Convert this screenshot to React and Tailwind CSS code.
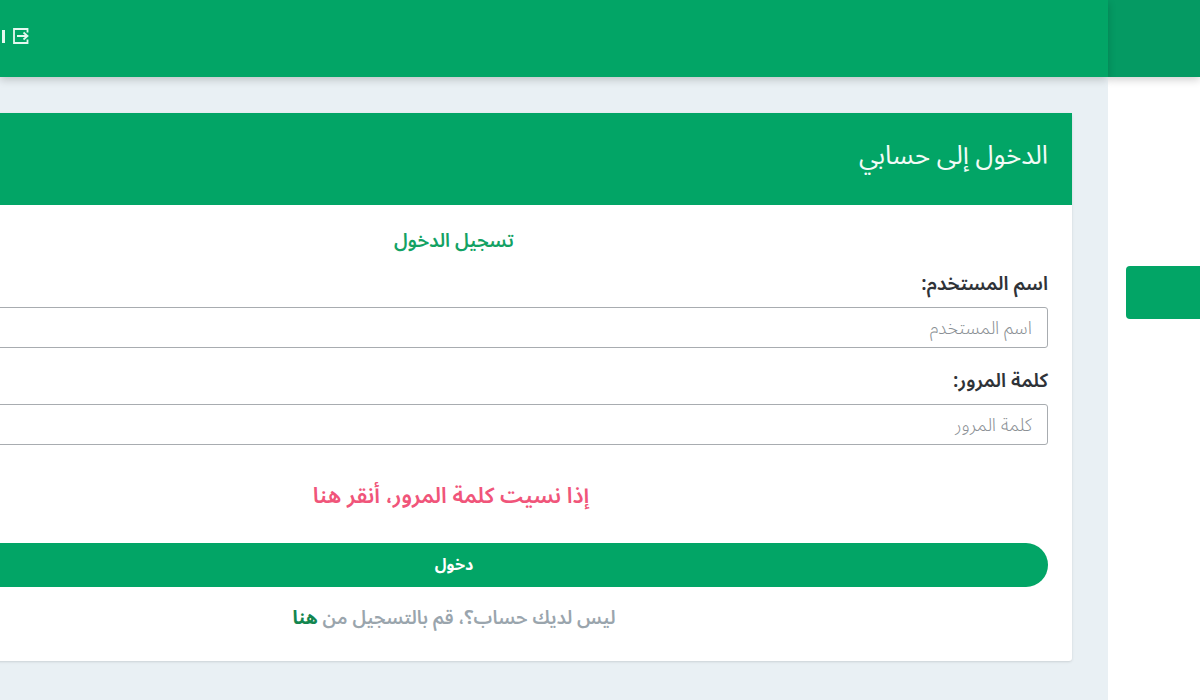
import React from "react";

const font = "font-['Noto_Sans_Arabic','DejaVu_Sans',sans-serif]";

function ExitIcon() {
  return (
    <svg viewBox="0 0 16 16" className="h-[16px] w-[16px]" fill="none" stroke="#e6f8f0" strokeWidth="1.8">
      <path d="M14.5 4.5V1H1v14h13.5v-3.5" />
      <path d="M4 8h10.5M10.5 4.5 14.5 8l-4 3.5" />
    </svg>
  );
}

function Field({ label, placeholder }) {
  return (
    <div className="mb-[16px]">
      <label className="block h-[40px] text-[19.4px] font-semibold leading-[34px] text-[#2f3338]">{label}</label>
      <input
        placeholder={placeholder}
        className="block h-[41px] w-full rounded-[3px] border border-[#a8acb0] bg-white px-[15px] text-[18px] font-light placeholder:text-[#8a8f94]"
      />
    </div>
  );
}

export default function App() {
  return (
    <div dir="rtl" className={`flex h-[700px] w-[1200px] overflow-hidden bg-white ${font}`}>
      {/* Sidebar */}
      <aside className="w-[92px] shrink-0 bg-white">
        <div className="h-[77px] bg-[#059a63] shadow-[0_3px_8px_rgba(0,0,0,0.18)]" />
        <div className="ml-[18px] mr-[-10px] mt-[189px] h-[53px] rounded-[4px] bg-[#02a566]" />
      </aside>

      {/* Main */}
      <main className="w-[1108px] shrink-0 bg-[#e9f0f4]">
        <header className="flex h-[77px] items-center justify-end gap-[8px] bg-[#02a566] pb-[5px] pl-[2px] text-white shadow-[0_3px_8px_rgba(0,0,0,0.18)]">
          <ExitIcon />
          <span className="h-[13px] w-[3px] bg-[#e6f8f0]" />
        </header>

        <section className="mr-[36px] mt-[36px] w-[1236px] rounded-[3px] bg-white shadow-sm">
          <div className="flex h-[92px] items-center bg-[#02a566] px-[24px] pb-[8px] text-[26px] text-[#f2fbf7]">
            الدخول إلى حسابي
          </div>
          <div className="h-[456px] px-[24px] pt-[21px]">
            <h2 className="mb-[11px] text-center text-[19px] font-semibold leading-[30px] text-[#13a264]">تسجيل الدخول</h2>
            <Field label="اسم المستخدم:" placeholder="اسم المستخدم" />
            <Field label="كلمة المرور:" placeholder="كلمة المرور" />
            <a className="mt-[35px] block pr-[6px] text-center text-[22px] font-semibold leading-[32px] text-[#f0557a]">
              إذا نسيت كلمة المرور، أنقر هنا
            </a>
            <button className="mt-[31px] block h-[44px] w-full rounded-full bg-[#02a566] text-[16px] font-bold text-white">
              دخول
            </button>
            <p className="mt-[17px] text-center text-[18.7px] font-semibold leading-[28px] text-[#9aa5ad]">
              ليس لديك حساب؟، قم بالتسجيل من <a className="font-bold text-[#13864f]">هنا</a>
            </p>
          </div>
        </section>
      </main>
    </div>
  );
}
